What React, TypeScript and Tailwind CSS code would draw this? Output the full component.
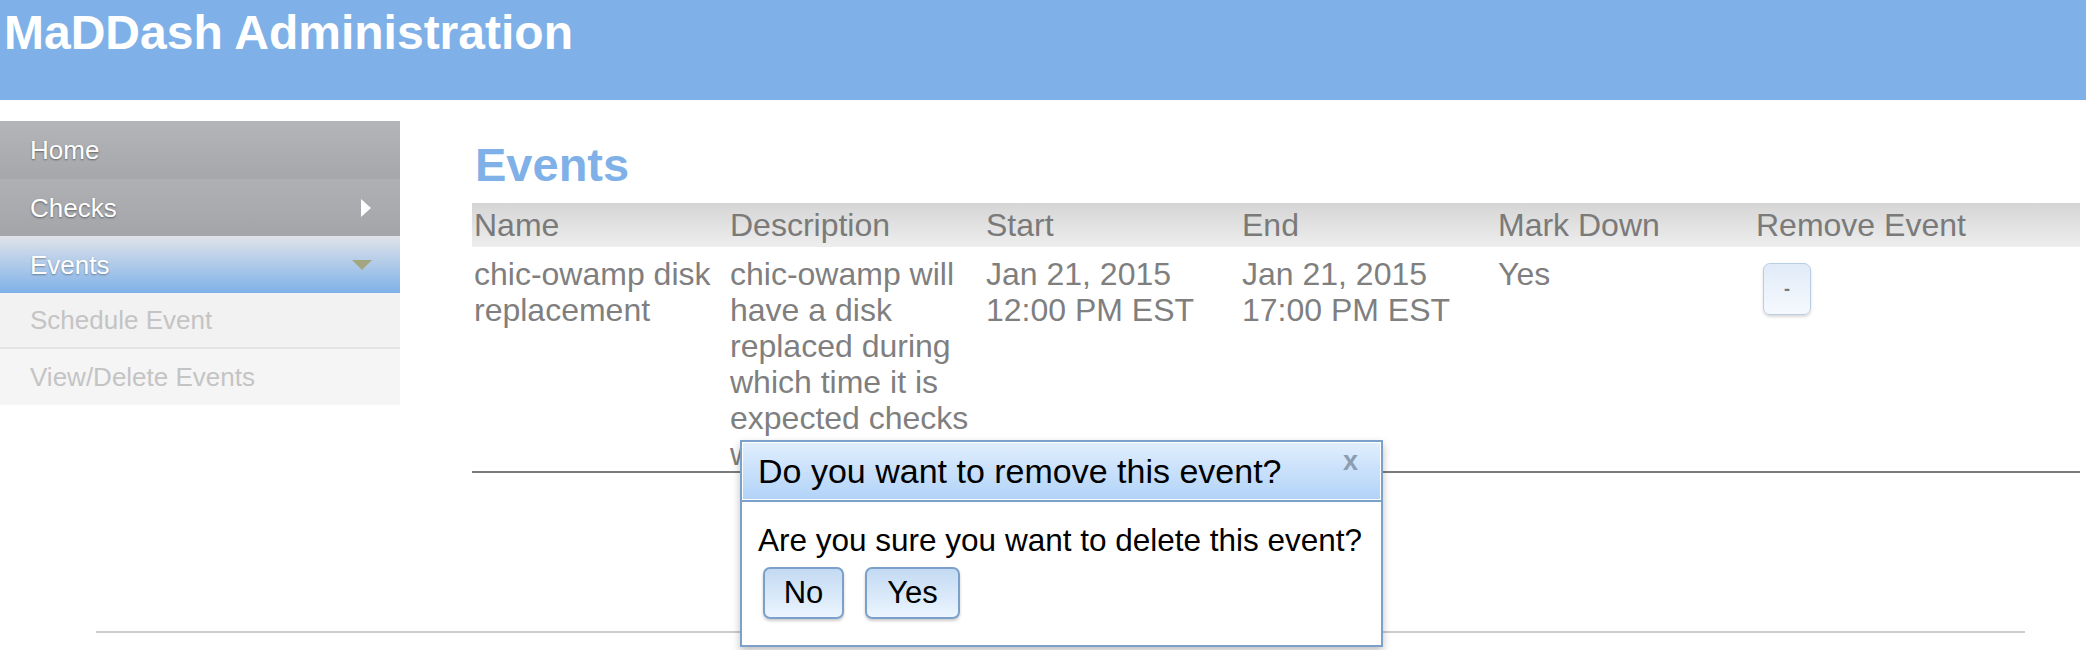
import React from "react";

const rows = [
  {
    name: "chic-owamp disk replacement",
    description:
      "chic-owamp will have a disk replaced during which time it is expected checks will fail.",
    start: ["Jan 21, 2015", "12:00 PM EST"],
    end: ["Jan 21, 2015", "17:00 PM EST"],
    markDown: "Yes",
  },
];

const cols = ["Name", "Description", "Start", "End", "Mark Down", "Remove Event"];

function Sidebar() {
  return (
    <nav className="flex w-[400px] flex-col text-[26px] leading-[26px]">
      <div className="flex h-[58px] items-center bg-gradient-to-b from-[#b4b5b9] to-[#a6a7ab] pl-[30px] text-white [text-shadow:0_1px_2px_rgba(0,0,0,0.45)]">
        Home
      </div>
      <div className="flex h-[57px] items-center justify-between bg-gradient-to-b from-[#afb0b4] to-[#a4a5a9] pl-[30px] pr-[29px] text-white [text-shadow:0_1px_2px_rgba(0,0,0,0.45)]">
        <span>Checks</span>
        <span className="h-0 w-0 border-y-[9px] border-l-[10px] border-y-transparent border-l-white" />
      </div>
      <div className="flex h-[57px] items-center justify-between bg-gradient-to-b from-[#dfe3e8] to-[#7fb1e8] pl-[30px] pr-[28px] text-white [text-shadow:0_1px_2px_rgba(0,0,0,0.35)]">
        <span>Events</span>
        <span className="h-0 w-0 border-x-[10px] border-t-[10px] border-x-transparent border-t-[#a3a67f]" />
      </div>
      <div className="flex h-[56px] items-center border-b-2 border-[#e3e3e3] bg-[#f2f2f2] pl-[30px] text-[#c4c4c4]">
        Schedule Event
      </div>
      <div className="flex h-[56px] items-center bg-[#f5f5f5] pl-[30px] text-[#c4c4c4]">
        View/Delete Events
      </div>
    </nav>
  );
}

function EventsTable() {
  return (
    <div className="w-[1608px] text-[32px] text-[#7f7f7f]">
      <div className="grid h-[44px] grid-cols-[256px_256px_256px_256px_258px_1fr] bg-gradient-to-b from-[#d5d5d5] to-[#eeeeee] leading-[44px] text-[#7a7a7a]">
        {cols.map((c) => (
          <div key={c} className="pl-[2px]">
            {c}
          </div>
        ))}
      </div>
      {rows.map((r) => (
        <div
          key={r.name}
          className="grid grid-cols-[256px_256px_256px_256px_258px_1fr] pt-[9px] leading-[36px]"
        >
          <div className="px-[2px]">{r.name}</div>
          <div className="px-[2px]">{r.description}</div>
          <div className="px-[2px]">
            {r.start[0]}
            <br />
            {r.start[1]}
          </div>
          <div className="px-[2px]">
            {r.end[0]}
            <br />
            {r.end[1]}
          </div>
          <div className="px-[2px]">{r.markDown}</div>
          <div className="px-[2px]">
            <button className="ml-[7px] mt-[7px] flex h-[52px] w-[48px] items-center justify-center rounded-[7px] border-[1.5px] border-[#b7cee6] bg-gradient-to-b from-[#e0ebf8] to-[#f6f9fe] text-[18px] font-bold leading-none text-[#777] shadow-[0_2px_3px_rgba(0,0,0,0.15)]">
              -
            </button>
          </div>
        </div>
      ))}
      <div className="-mt-[1px] h-[2px] bg-[#7b7b7b]" />
    </div>
  );
}

function ConfirmDialog() {
  return (
    <div className="absolute left-[740px] top-[440px] flex h-[207px] w-[643px] flex-col border-2 border-[#7ba0c9] bg-white shadow-[0_4px_8px_rgba(0,0,0,0.25)]">
      <div className="border-b-2 border-[#7ba0c9] p-[1px]">
        <div className="relative h-[56px] bg-gradient-to-b from-[#e0eefd] to-[#b2d3f8] pl-[15px] text-[34px] leading-[56px] text-black">
          Do you want to remove this event?
          <span className="absolute right-[22px] top-[5px] text-[27px] font-bold leading-none text-[#8a9db3]">
            x
          </span>
        </div>
      </div>
      <div className="pl-[16px] pt-[20px] text-black">
        <p className="whitespace-nowrap text-[31.5px] leading-[36px]">
          Are you sure you want to delete this event?
        </p>
        <div className="ml-[5px] mt-[9px] flex gap-[21px]">
          <button className="h-[52px] w-[81px] rounded-[7px] border-2 border-[#7ba0c9] bg-gradient-to-b from-[#c3daf3] to-[#ebf5fe] text-center text-[31px] leading-[46px] text-black shadow-[0_2px_3px_rgba(0,0,0,0.2)]">
            No
          </button>
          <button className="h-[52px] w-[95px] rounded-[7px] border-2 border-[#7ba0c9] bg-gradient-to-b from-[#c3daf3] to-[#ebf5fe] text-center text-[31px] leading-[46px] text-black shadow-[0_2px_3px_rgba(0,0,0,0.2)]">
            Yes
          </button>
        </div>
      </div>
    </div>
  );
}

export default function App() {
  return (
    <div className="relative h-[650px] w-full overflow-hidden bg-white font-['Liberation_Sans',Arial,sans-serif]">
      <header className="h-[100px] bg-[#7fb1e8] pl-[4px] pt-[9px]">
        <h1 className="text-[48px] font-bold leading-[48px] text-white">MaDDash Administration</h1>
      </header>
      <div className="flex pt-[21px]">
        <Sidebar />
        <main className="ml-[72px]">
          <h2 className="mt-[20px] pl-[3px] text-[47px] font-bold leading-[47px] text-[#7fb1e8]">Events</h2>
          <div className="mt-[15px]">
            <EventsTable />
          </div>
        </main>
      </div>
      <div className="ml-[96px] mr-[61px] mt-[158px] border-t-2 border-[#cccccc]" />
      <ConfirmDialog />
    </div>
  );
}
